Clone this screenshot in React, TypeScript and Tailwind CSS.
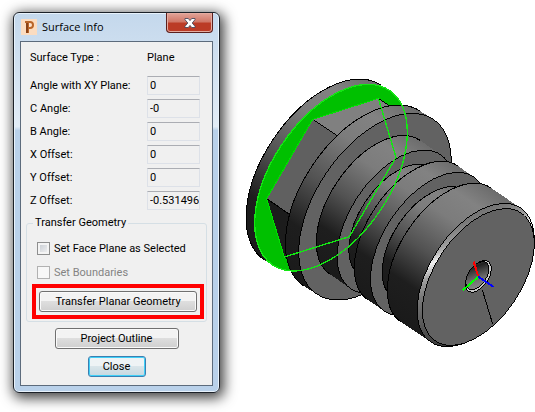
import { useState } from "react";

interface Point {
  x: number;
  y: number;
}

interface Segment {
  from: Point;
  to: Point;
  radius: number;
}

const offsets = [
  { id: "xy-angle", label: "Angle with XY Plane:", value: "0" },
  { id: "c-angle", label: "C Angle:", value: "-0" },
  { id: "b-angle", label: "B Angle:", value: "0" },
  { id: "x-offset", label: "X Offset:", value: "0" },
  { id: "y-offset", label: "Y Offset:", value: "0" },
  { id: "z-offset", label: "Z Offset:", value: "-0.531496" },
];

// Projected circle: minor / major ratio, tilt and unit vector of the major axis
const RATIO = 0.564;
const TILT = -56.3;
const MAJOR = { x: 0.555, y: -0.832 };

const flange: Segment = {
  from: { x: 262, y: 337 },
  to: { x: 288, y: 353 },
  radius: 315,
};

const shaft: Segment[] = [
  { from: { x: 380, y: 415 }, to: { x: 420, y: 440 }, radius: 315 },
  { from: { x: 420, y: 442 }, to: { x: 482, y: 485 }, radius: 242 },
  { from: { x: 482, y: 485 }, to: { x: 534, y: 519 }, radius: 193 },
  { from: { x: 534, y: 519 }, to: { x: 582, y: 552 }, radius: 242 },
  { from: { x: 582, y: 552 }, to: { x: 633, y: 585 }, radius: 193 },
  { from: { x: 633, y: 585 }, to: { x: 722, y: 645 }, radius: 242 },
];

const rim = (c: Point, r: number, side: 1 | -1) =>
  `${c.x + side * r * MAJOR.x} ${c.y + side * r * MAJOR.y}`;

const arc = (r: number) => `A ${r} ${r * RATIO} ${TILT} 0 0`;

const Disc = ({
  center,
  radius,
  fill,
  stroke = "#000",
}: {
  center: Point;
  radius: number;
  fill: string;
  stroke?: string;
}) => (
  <ellipse
    cx={center.x}
    cy={center.y}
    rx={radius}
    ry={radius * RATIO}
    transform={`rotate(${TILT} ${center.x} ${center.y})`}
    fill={fill}
    stroke={stroke}
  />
);

const Cylinder = ({ id, part }: { id: string; part: Segment }) => {
  const { from, to, radius } = part;
  const edge = `M ${rim(from, radius, 1)} ${arc(radius)} ${rim(from, radius, -1)}`;
  return (
    <g>
      <linearGradient
        id={id}
        gradientUnits="userSpaceOnUse"
        x1={from.x + radius * MAJOR.x}
        y1={from.y + radius * MAJOR.y}
        x2={from.x - radius * MAJOR.x}
        y2={from.y - radius * MAJOR.y}
      >
        <stop offset="0" stopColor="#6c6c6c" />
        <stop offset="0.14" stopColor="#828282" />
        <stop offset="0.3" stopColor="#7c7c7c" />
        <stop offset="0.55" stopColor="#525252" />
        <stop offset="0.78" stopColor="#1e1e1e" />
        <stop offset="1" stopColor="#1a1a1a" />
      </linearGradient>
      <path
        d={`${edge} L ${rim(to, radius, -1)} ${arc(radius)} ${rim(to, radius, 1)} Z`}
        fill={`url(#${id})`}
      />
      <path d={edge} fill="none" stroke="#000" />
      <Disc center={to} radius={radius} fill="#626262" />
    </g>
  );
};

const PartView = () => (
  <svg
    viewBox="0 0 900 900"
    strokeWidth={3}
    shapeRendering="crispEdges"
    className="w-full"
    role="img"
    aria-label="Turned part with selected planar face"
  >
    <defs>
      <linearGradient id="chamfer" gradientUnits="userSpaceOnUse" x1="858" y1="459" x2="602" y2="843">
        <stop offset="0" stopColor="#5c5c5c" />
        <stop offset="0.16" stopColor="#7a7a7a" />
        <stop offset="0.25" stopColor="#a0a0a0" />
        <stop offset="0.32" stopColor="#f2f2f2" />
        <stop offset="0.4" stopColor="#a0a0a0" />
        <stop offset="0.5" stopColor="#787878" />
        <stop offset="0.75" stopColor="#484848" />
        <stop offset="1" stopColor="#202020" />
      </linearGradient>
      <linearGradient id="bore" gradientUnits="userSpaceOnUse" x1="758" y1="612" x2="702" y2="685">
        <stop offset="0" stopColor="#4c4c4c" />
        <stop offset="0.2" stopColor="#222" />
        <stop offset="0.6" stopColor="#6c6c6c" />
        <stop offset="1" stopColor="#909090" />
      </linearGradient>
    </defs>

    {/* Flange and hexagon */}
    <Cylinder id="flange" part={flange} />
    <Disc center={flange.to} radius={315} fill="#00c000" stroke="#00e000" />
    <path d="M233 178 L430 115 L530 182 L400 290 Z" fill="#808080" />
    <path d="M233 178 L95 416 L240 515 L400 290 Z" fill="#606060" />
    <path d="M95 416 L148 591 L240 650 L240 515 Z" fill="#1c1c1c" />
    <path d="M233 178 L305 226 M95 416 L162 462 M430 115 L464 138" stroke="#000" />
    <path d="M430 115 L233 178 L95 416 L148 591" fill="none" stroke="#00e000" />

    {/* Stepped shaft */}
    {shaft.map((part, idx) => (
      <Cylinder key={idx} id={`shaft-${idx}`} part={part} />
    ))}
    <Disc center={{ x: 722, y: 645 }} radius={242} fill="url(#chamfer)" />
    <Disc center={{ x: 730, y: 651 }} radius={231} fill="#626262" />

    {/* Bore */}
    <Disc center={{ x: 730, y: 649 }} radius={54} fill="#c8c8c8" />
    <Disc center={{ x: 727, y: 647 }} radius={48} fill="url(#bore)" />
    <path d="M742 690 L773 792" stroke="#000" />

    {/* Selected plane outline */}
    <g fill="none" stroke="#14e614" strokeWidth={4}>
      <Disc center={flange.to} radius={315} fill="none" stroke="#14e614" />
      <path d="M430 115 L483 292 L343 530 L148 591" />
    </g>

    {/* Axis triad */}
    <g strokeWidth={6}>
      <path d="M730 650 L716 605" stroke="#f00" />
      <path d="M730 650 L683 691" stroke="#0f0" />
      <path d="M730 650 L776 681" stroke="#00f" />
    </g>
  </svg>
);

const buttonStyle =
  "flex items-center justify-center rounded-[3px] border border-[#707070] bg-linear-to-b from-[#f3f3f3] from-45% via-[#dedede] via-50% to-[#cfcfcf] pt-[2px] shadow-[inset_0_0_0_1px_#fafafa]";

const SurfaceDialog = () => {
  const [facePlane, setFacePlane] = useState(false);

  return (
    <section className="w-[207px] shrink-0 rounded-[6px] border border-[#1c2128] bg-linear-to-b from-[#c4d8ec] from-0% via-[#e2ecf6] via-30% to-[#b9d1ea] to-31% px-[6px] pb-[6px] shadow-[inset_0_0_0_1px_#e8f2fb,2px_3px_13px_2px_rgba(0,0,0,0.75)]">
      {/* Title bar */}
      <header className="flex h-7 items-center">
        <svg viewBox="0 0 16 16" className="ml-px size-4">
          <rect width="16" height="16" fill="#fbdcc0" />
          <path d="M4 2h5q4 0 4 4t-4 4H8v4H5V4H4z" fill="#b9652a" />
          <path d="M8 4h1q2 0 2 2t-2 2H8z" fill="#fbe3cf" />
          <path d="M5 4h2v10H5z" fill="#8a4216" />
        </svg>
        <h1 className="ml-[5px] flex-1 font-['Open_Sans',sans-serif] text-[11px] text-black">
          Surface Info
        </h1>
        <button
          aria-label="Close window"
          className="flex h-5 w-[47px] items-center justify-center self-start rounded-b-[4px] border border-t-0 border-[#5b1f1c] bg-linear-to-b from-[#e2a59a] from-0% via-[#cf7565] via-48% to-[#bb3b26] to-52% shadow-[inset_0_0_0_1px_#e5aca0]"
        >
          <svg viewBox="0 0 12 10" className="h-[10px] w-3">
            <path
              d="M1 .5h3.300L6 2.600 7.700.5H11v1.200L8.200 5 11 8.300v1.200H7.700L6 7.400 4.300 9.500H1V8.300L3.800 5 1 1.700z"
              fill="#fff"
              stroke="#4b4a5c"
              strokeWidth="0.900"
            />
          </svg>
        </button>
      </header>

      <div className="border border-[#5c6b7c] bg-[#f0f0f0] pt-1 pb-2">
        <div className="flex h-[23px] items-center justify-between pt-[2px] pr-3 pl-[9px]">
          <span>Surface Type :</span>
          <span className="w-[53px]">Plane</span>
        </div>

        {/* Plane values */}
        <div className="mt-[5px] pr-3 pl-[9px]">
          {offsets.map((item) => (
            <div key={item.id} className="flex h-[23px] items-center justify-between">
              <label htmlFor={item.id} className="pt-[2px]">
                {item.label}
              </label>
              <input
                id={item.id}
                readOnly
                defaultValue={item.value}
                className="h-[19px] w-[53px] border border-[#dde1e8] border-t-[#abadb3] bg-[#f0f0f0] pl-[2px]"
              />
            </div>
          ))}
        </div>

        {/* Transfer geometry */}
        <fieldset className="mx-[5px] mt-1 rounded-[3px] border border-[#d5dfe5] pb-[2px]">
          <legend className="ml-[6px] px-[2px] leading-[14px]">Transfer Geometry</legend>
          <div className="pt-[6px]">
            <label className="flex h-6 items-center gap-1 pl-[10px]">
              <input
                type="checkbox"
                checked={facePlane}
                onChange={() => setFacePlane(!facePlane)}
                className="size-[13px] appearance-none border border-[#8e8f8f] bg-linear-to-br from-[#c4c9d0] to-[#f6f6f6] shadow-[inset_0_0_0_2px_#f4f4f4] checked:bg-[#4b6097]"
              />
              <span className="pt-[2px]">Set Face Plane as Selected</span>
            </label>
            <label className="flex h-6 items-center gap-1 pl-[10px] text-[#838383]">
              <input
                type="checkbox"
                disabled
                className="size-[13px] appearance-none border border-[#b1b1b1] bg-[#f7f7f7]"
              />
              <span className="pt-[2px]">Set Boundaries</span>
            </label>
          </div>
          <div className="mr-[2px] ml-[5px] border-4 border-[#f00] p-[3px]">
            <button className={`${buttonStyle} h-[21px] w-full`}>Transfer Planar Geometry</button>
          </div>
        </fieldset>

        <div className="mt-[6px] flex flex-col items-center gap-[7px]">
          <button className={`${buttonStyle} h-[21px] w-[124px]`}>Project Outline</button>
          <button className="flex h-[21px] w-[58px] items-center justify-center rounded-[3px] border border-[#3c7fb1] bg-linear-to-b from-[#eef3f5] from-45% via-[#d9e5ea] via-50% to-[#c6d8e0] pt-[2px] shadow-[inset_0_0_0_1px_#3fd0f8]">
            Close
          </button>
        </div>
      </div>
    </section>
  );
};

const App = () => {
  return (
    <main className="flex min-h-screen items-start gap-[15px] overflow-hidden bg-white pt-3 pl-[13px] font-[Roboto,'Liberation_Sans',sans-serif] text-[11px] text-black">
      <SurfaceDialog />
      <div className="mt-12 min-w-0 flex-1">
        <PartView />
      </div>
    </main>
  );
};

export default App;
